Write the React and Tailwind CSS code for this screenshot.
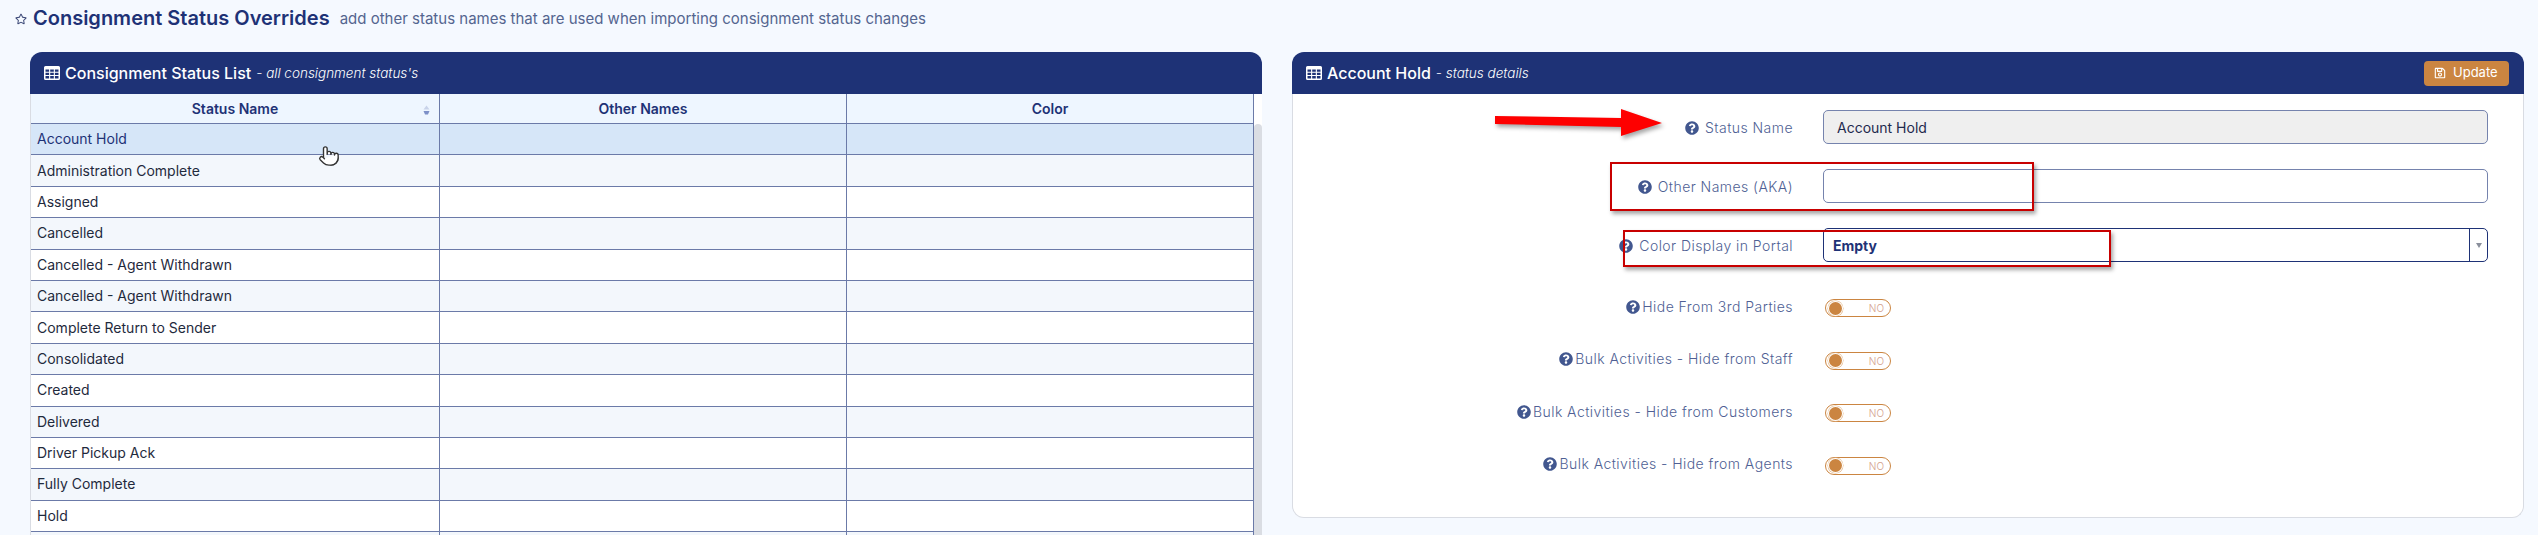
import { FaRegStar, FaQuestionCircle, FaRegSave } from 'react-icons/fa';
import { Pointer } from 'lucide-react';

const statuses = [
  'Account Hold',
  'Administration Complete',
  'Assigned',
  'Cancelled',
  'Cancelled - Agent Withdrawn',
  'Cancelled - Agent Withdrawn',
  'Complete Return to Sender',
  'Consolidated',
  'Created',
  'Delivered',
  'Driver Pickup Ack',
  'Fully Complete',
  'Hold',
  '',
];

const toggles = [
  'Hide From 3rd Parties',
  'Bulk Activities - Hide from Staff',
  'Bulk Activities - Hide from Customers',
  'Bulk Activities - Hide from Agents',
];

function TableIcon() {
  return (
    <svg className="mr-[5px] shrink-0" width="16" height="14" viewBox="0 0 16 14" fill="currentColor">
      <path
        fillRule="evenodd"
        d="M1.5 0h13A1.5 1.5 0 0 1 16 1.5v11a1.5 1.5 0 0 1-1.5 1.5h-13A1.5 1.5 0 0 1 0 12.5v-11A1.5 1.5 0 0 1 1.5 0ZM1.5 3.5v2.3h3.6V3.5ZM6.2 3.5v2.3h3.6V3.5ZM10.900 3.500v2.300h3.600V3.500ZM1.500 6.800v2.300h3.600V6.800ZM6.200 6.800v2.300h3.600V6.800ZM10.900 6.800v2.300h3.600V6.800ZM1.500 10.100v2.400h3.600v-2.400ZM6.200 10.100v2.400h3.600v-2.400ZM10.900 10.100v2.400h3.600v-2.400Z"
      />
    </svg>
  );
}

function PanelHeader({ title, note, children }) {
  return (
    <div className="flex items-center justify-between h-[42px] pl-[14px] pr-[15px] bg-[#1e3276] rounded-t-[12px] text-white">
      <div className="flex items-center">
        <TableIcon />
        <span className="text-base font-medium">{title}</span>
        <span className="ml-[5px] text-[13.5px] italic font-light">- {note}</span>
      </div>
      {children}
    </div>
  );
}

function StatusRow({ name, index }) {
  const bg = index === 0 ? 'bg-[#d6e6f8]' : index % 2 === 1 ? 'bg-[#f3f7fc]' : 'bg-white';
  const color = index === 0 ? 'text-[#1e3276]' : 'text-[#1f2a3d]';
  return (
    <div className={`grid grid-cols-[409px_407px_407px] h-[31.4px] border-b border-[#6b7aa8] text-sm ${bg} ${color}`}>
      <div className="flex items-center pl-[6px] border-r border-[#6b7aa8]">{name}</div>
      <div className="border-r border-[#6b7aa8]"></div>
      <div className="border-r border-[#6b7aa8]"></div>
    </div>
  );
}

function HeadCell({ children, sort }) {
  return (
    <div className="relative flex items-center justify-center border-r border-[#6b7aa8] text-sm font-semibold text-[#1e3276]">
      {children}
      {sort && (
        <svg className="absolute right-[9px] top-[11px]" width="7" height="11" viewBox="0 0 7 11">
          <path d="M3.5 0.5 L6.5 4.500 H0.5 Z" fill="#c9d3ea" />
          <path d="M0.5 6 H6.5 L5 9.5 H2 L0.5 6 Z" fill="#7d90c8" />
        </svg>
      )}
    </div>
  );
}

function FieldLabel({ children, tight }) {
  return (
    <label className={`flex items-center justify-end w-[500px] shrink-0 text-sm font-light tracking-[0.45px] text-[#4f5f94] ${tight ? 'pb-[3px]' : 'pt-[2px]'}`}>
      <FaQuestionCircle className={`w-[14px] h-[14px] text-[#42578f] ${tight ? 'mr-[2px]' : 'mr-[6px]'}`} />
      {children}
    </label>
  );
}

function Toggle() {
  return (
    <div className="relative flex items-center justify-end w-[66px] h-[18px] ml-[2px] pr-[6px] pt-[1px] rounded-full border border-[#cb8541] text-[10px] font-light text-[#d3a08c]">
      <span className="absolute left-[3px] top-[1.5px] w-[13px] h-[13px] rounded-full bg-[#cb8541] shadow-[0_0_0_1px_white,0_0_0_1.5px_#e3b98c]"></span>
      NO
    </div>
  );
}

export default function App() {
  return (
    <div className="relative w-[2538px] h-[535px] overflow-hidden bg-[#f5f9ff] font-['Inter',sans-serif]">
      {/* Page title */}
      <div className="flex items-center h-[40px] pl-[15px] pb-[5px]">
        <FaRegStar className="w-3 h-3 mr-[6px] mt-[2px] text-[#3d4a78]" />
        <h1 className="text-xl font-semibold text-[#1e3276]">Consignment Status Overrides</h1>
        <span className="ml-[10px] mt-[4px] text-[15px] text-[#54658f]">
          add other status names that are used when importing consignment status changes
        </span>
      </div>

      <div className="flex items-start gap-[30px] mt-3 pl-[30px]">
        {/* List panel */}
        <section className="w-[1232px]">
          <PanelHeader title="Consignment Status List" note="all consignment status's" />
          <div className="flex border-l border-[#d9dce3]">
            <div>
              <div className="grid grid-cols-[409px_407px_407px] h-[30px] bg-[#eef6ff] border-b border-[#6b7aa8]">
                <HeadCell sort>Status Name</HeadCell>
                <HeadCell>Other Names</HeadCell>
                <HeadCell>Color</HeadCell>
              </div>
              {statuses.map((name, i) => (
                <StatusRow key={i} name={name} index={i} />
              ))}
            </div>
            <div className="flex-1 pt-[30px] bg-white">
              <div className="h-[500px] bg-[#dadde3] rounded-t-sm"></div>
            </div>
          </div>
        </section>

        {/* Details panel */}
        <section className="w-[1232px]">
          <PanelHeader title="Account Hold" note="status details">
            <button className="flex items-center h-[25px] w-[85px] pl-[10px] rounded bg-[#cb8541] text-[13px] text-white">
              <FaRegSave className="w-3 h-3 mr-[7px]" />
              Update
            </button>
          </PanelHeader>
          <div className="h-[424px] pt-4 bg-white border-x border-b border-[#d9dce3] rounded-b-[12px]">
            <div className="flex items-center gap-[30px] h-[34px]">
              <FieldLabel>Status Name</FieldLabel>
              <input
                readOnly
                value="Account Hold"
                className="w-[665px] h-[34px] px-[13px] pt-[1px] bg-[#efefef] border border-[#7583ad] rounded-[5px] text-sm text-[#1f2a4d]"
              />
            </div>
            <div className="flex items-center gap-[30px] h-[34px] mt-[25px]">
              <FieldLabel>Other Names (AKA)</FieldLabel>
              <input readOnly className="w-[665px] h-[34px] px-[13px] bg-white border border-[#7583ad] rounded-[5px] text-sm" />
            </div>
            <div className="flex items-center gap-[30px] h-[34px] mt-[25px]">
              <FieldLabel>Color Display in Portal</FieldLabel>
              <div className="flex w-[665px] h-[34px] bg-white border border-[#1e3276] rounded-[5px]">
                <span className="flex-1 flex items-center pl-[9px] pt-[1px] text-sm font-bold text-[#1e3276]">Empty</span>
                <span className="flex items-center justify-center w-[18px] border-l border-[#1e3276]">
                  <svg width="6" height="6" viewBox="0 0 6 6">
                    <path d="M0 1 H6 L3 6 Z" fill="#8a8f9c" />
                  </svg>
                </span>
              </div>
            </div>
            <div className="flex flex-col gap-[34.5px] mt-[37px]">
              {toggles.map(label => (
                <div key={label} className="flex items-center gap-[30px] h-[18px]">
                  <FieldLabel tight>{label}</FieldLabel>
                  <Toggle />
                </div>
              ))}
            </div>
          </div>
        </section>
      </div>

      {/* Annotations drawn over the screenshot */}
      <svg className="absolute left-[1490px] top-[104px] drop-shadow-[2px_3px_2px_rgba(0,0,0,0.35)]" width="180" height="40" viewBox="0 0 180 40">
        <polygon points="5,12 131,14 131,5 172,19 131,32 131,23 5,20" fill="#fe0000" />
      </svg>
      <div className="absolute left-[1610px] top-[162px] w-[424px] h-[49px] border-2 border-[#c80000] shadow-[2px_3px_4px_rgba(0,0,0,0.35)]"></div>
      <div className="absolute left-[1623px] top-[230px] w-[488px] h-[37px] border-2 border-[#c80000] shadow-[2px_3px_4px_rgba(0,0,0,0.35)]"></div>

      {/* Mouse cursor */}
      <Pointer className="absolute left-[318px] top-[144px] w-[22px] h-[24px] text-[#333] fill-white" strokeWidth={1.5} />
    </div>
  );
}
